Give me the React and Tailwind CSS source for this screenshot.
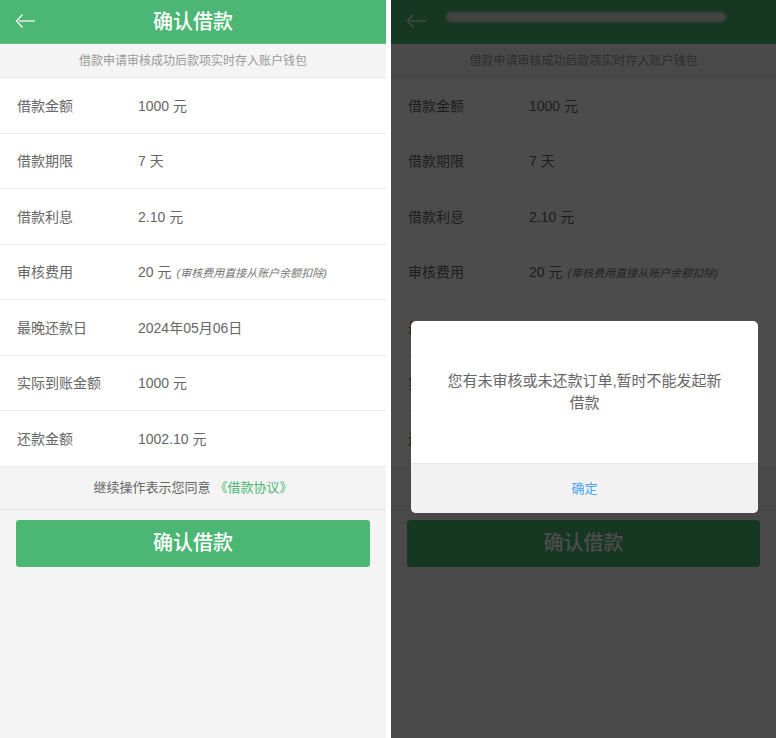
import React from 'react';

const font = { fontFamily: '"Liberation Sans", "Noto Sans CJK SC", sans-serif' };

const rows = [
  { label: '借款金额', value: '1000 元' },
  { label: '借款期限', value: '7 天' },
  { label: '借款利息', value: '2.10 元' },
  { label: '审核费用', value: '20 元', note: '(审核费用直接从账户余额扣除)' },
  { label: '最晚还款日', value: '2024年05月06日' },
  { label: '实际到账金额', value: '1000 元' },
  { label: '还款金额', value: '1002.10 元' },
];

const BackArrow = () => (
  <svg width="22" height="16" viewBox="0 0 22 16" fill="none" stroke="white" strokeWidth="1.2">
    <path d="M7.5 1.5 L1.5 8 L7.5 14.5" />
    <path d="M4 8 H20" />
  </svg>
);

const LoanScreen = ({ dimmed }) => (
  <div className="relative h-full bg-[#f4f4f4]">
    <header className="relative flex h-[44px] items-center justify-center border-b border-[#5cc184] bg-[#4cb774]">
      <div className="absolute left-[15px] top-[13px]">
        <BackArrow />
      </div>
      {dimmed ? (
        <div className="absolute left-[55px] top-[12px] h-[10px] w-[280px] rounded-full bg-[#e4e4e4] blur-[1.5px]" />
      ) : (
        <h1 className="text-[20px] font-medium text-white">确认借款</h1>
      )}
    </header>
    <div className="flex h-[34px] items-center justify-center border-b border-[#e6e6e6] text-[12px] text-[#999]">
      借款申请审核成功后款项实时存入账户钱包
    </div>
    <div className="bg-white">
      {rows.map((row) => (
        <div
          key={row.label}
          className="flex h-[55.5px] items-center border-b border-[#ececec] px-[17px] pt-[2px] text-[14px] text-[#666]"
        >
          <span className="w-[121px] shrink-0">{row.label}</span>
          <span>{row.value}</span>
          {row.note && <span className="ml-[5px] text-[11px] italic text-[#777]">{row.note}</span>}
        </div>
      ))}
    </div>
    <div className="flex h-[43px] items-center justify-center border-b border-[#e3e3e3] text-[13px] text-[#666]">
      继续操作表示您同意
      <span className="ml-[4px] text-[#4cb774]">《借款协议》</span>
    </div>
    <div className="px-[16px] pt-[10px]">
      <button className="flex h-[47px] w-full items-center justify-center rounded-[3px] bg-[#4cb774] text-[20px] font-medium text-white">
        确认借款
      </button>
    </div>
    {dimmed && <div className="absolute inset-0 bg-black/70" />}
  </div>
);

export default function App() {
  return (
    <div className="flex h-[738px] w-[776px] overflow-hidden bg-white" style={font}>
      <div className="h-full w-[386px] shrink-0">
        <LoanScreen />
      </div>
      <div className="relative ml-[5px] h-full w-[385px] shrink-0">
        <LoanScreen dimmed />
        <div className="absolute left-[20px] top-[321px] w-[347px] overflow-hidden rounded-[5px] bg-white">
          <div className="flex h-[142px] items-center justify-center px-[32px] text-center text-[15px] leading-[22px] text-[#666]">
            您有未审核或未还款订单,暂时不能发起新借款
          </div>
          <div className="flex h-[50px] items-center justify-center border-t border-[#e8e8e8] bg-[#f2f2f2] text-[13px] text-[#4aa3f0]">
            确定
          </div>
        </div>
      </div>
    </div>
  );
}
